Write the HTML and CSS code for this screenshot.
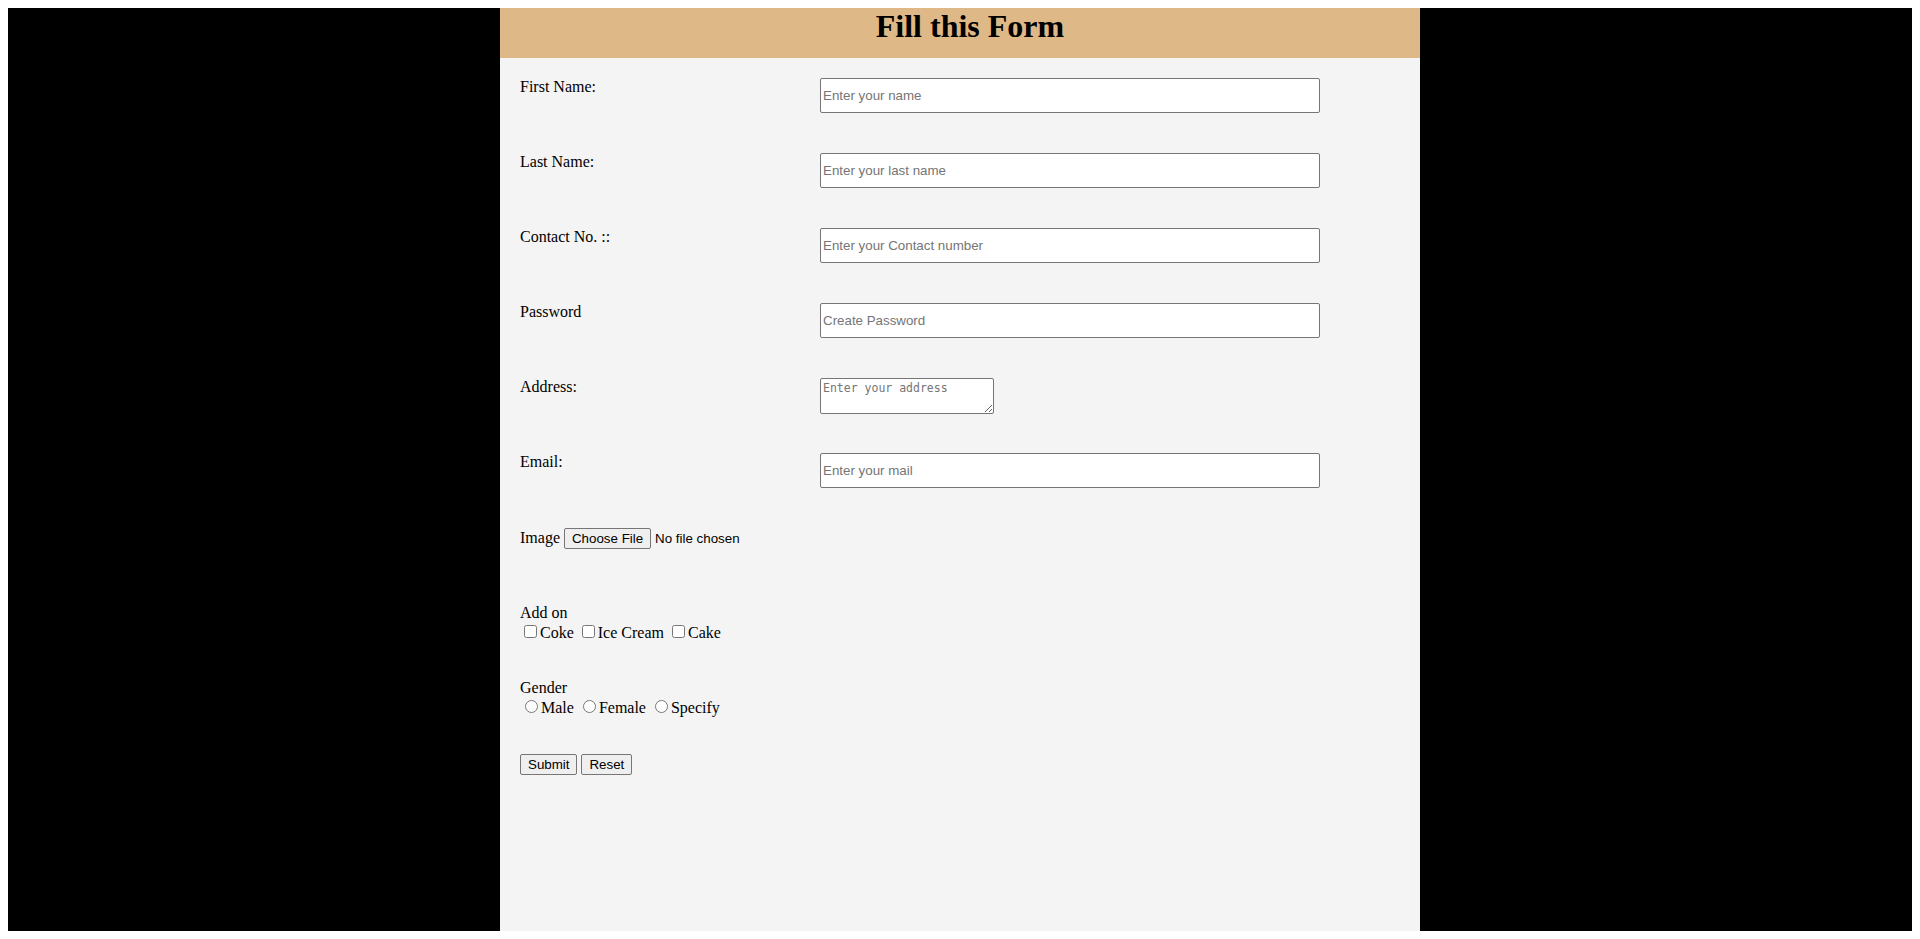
FILE: index.html
```html
<!DOCTYPE html>
<html>
<head>
<meta charset="utf-8">
<title>Form</title>
<link rel="stylesheet" href="styles.css">
</head>
<body>
<div class="page">
  <div class="panel">
    <div class="header"><h1 class="title">Fill this Form</h1></div>
    <form class="form">
      <label class="lbl">First Name:</label>
      <input class="field" type="text" placeholder="Enter your name">
      <label class="lbl">Last Name:</label>
      <input class="field" type="text" placeholder="Enter your last name">
      <label class="lbl">Contact No. ::</label>
      <input class="field" type="text" placeholder="Enter your Contact number">
      <label class="lbl">Password</label>
      <input class="field" type="password" placeholder="Create Password">
      <label class="lbl">Address:</label>
      <div><textarea class="area" placeholder="Enter your address"></textarea></div>
      <label class="lbl">Email:</label>
      <input class="field" type="email" placeholder="Enter your mail">
      <div class="full">Image <input class="file" type="file"></div>
      <div class="full shift">Add on<br><input class="chk" type="checkbox">Coke <input class="chk" type="checkbox">Ice Cream <input class="chk" type="checkbox">Cake</div>
      <div class="full shift">Gender<br><input class="rad" type="radio" name="g">Male <input class="rad" type="radio" name="g">Female <input class="rad" type="radio" name="g">Specify</div>
      <div class="full shift"><input class="btn" type="submit" value="Submit"> <input class="btn" type="reset" value="Reset"></div>
    </form>
  </div>
</div>
</body>
</html>
```
FILE: styles.css
```css
html, body {
  background: #ffffff;
}
body {
  margin: 8px;
  font-family: "Liberation Serif", "Times New Roman", serif;
  font-size: 16px;
}
.page {
  background: #000000;
  height: calc(100vh - 16px);
  display: flex;
  justify-content: center;
}
.panel {
  width: 920px;
  background: #f4f4f4;
  display: flex;
  flex-direction: column;
}
.header {
  height: 50px;
  padding-left: 20px;
  background: #deb887;
}
.title {
  margin: 0;
  text-align: center;
  font-size: 32px;
  font-weight: bold;
  line-height: normal;
}
.form {
  display: grid;
  grid-template-columns: 300px 500px;
  grid-auto-rows: 35px;
  row-gap: 40px;
  padding: 20px 0 0 20px;
  margin: 0;
}
.lbl {
  align-self: start;
}
.full {
  grid-column: 1 / span 2;
  white-space: nowrap;
}
.shift {
  padding-top: 1px;
}
.field {
  box-sizing: border-box;
  width: 500px;
  height: 35px;
  margin: 0;
  padding: 1px 2px;
  border: 1px solid #767676;
  border-radius: 2px;
  background: #ffffff;
  font-family: "Liberation Sans", Arial, sans-serif;
  font-size: 13.333px;
}
.field::placeholder,
.area::placeholder {
  color: #757575;
}
.area {
  box-sizing: border-box;
  width: 174px;
  height: 36px;
  margin: 0;
  padding: 2px;
  border: 1px solid #767676;
  border-radius: 2px;
  background: #ffffff;
  font-family: "DejaVu Sans Mono", "Liberation Mono", monospace;
  font-size: 11.5px;
  display: block;
}
.file {
  font-family: "Liberation Sans", Arial, sans-serif;
  font-size: 13.333px;
  margin: 0;
}
.file::file-selector-button {
  font-family: "Liberation Sans", Arial, sans-serif;
  font-size: 13.333px;
  background: #efefef;
  border: 1px solid #767676;
  border-radius: 2px;
  padding: 1px 7px;
  margin: 0 4px 0 0;
  height: 21px;
}
.chk {
  margin: 3px 3px 3px 4px;
  width: 13px;
  height: 13px;
}
.rad {
  margin: 3px 3px 0 5px;
  width: 13px;
  height: 13px;
}
.btn {
  font-family: "Liberation Sans", Arial, sans-serif;
  font-size: 13.333px;
  background: #efefef;
  border: 1px solid #767676;
  border-radius: 2px;
  padding: 1px 7px;
  margin: 0;
  height: 21px;
  color: #000000;
}
```
